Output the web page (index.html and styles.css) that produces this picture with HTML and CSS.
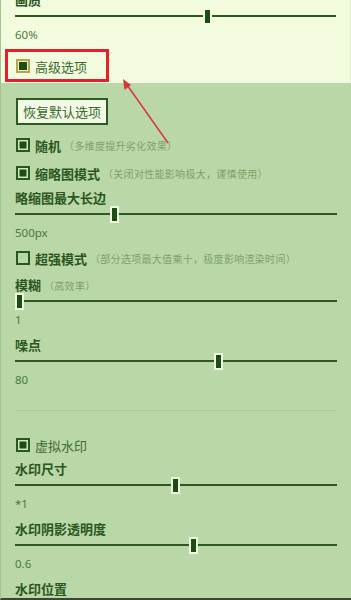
FILE: index.html
```html
<!DOCTYPE html>
<html lang="zh-CN">
<head>
<meta charset="utf-8">
<title>设置</title>
<link rel="stylesheet" href="styles.css">
</head>
<body>
<div class="frame">
  <section class="top">
    <div class="label first">画质</div>
    <div class="slider"><span class="thumb" style="left:188px"></span></div>
    <div class="value">60%</div>
    <div class="cb-row adv"><span class="cb checked focus"></span><span class="cb-text">高级选项</span></div>
  </section>
  <section class="adv-panel">
    <button class="reset">恢复默认选项</button>
    <div class="cb-row r1"><span class="cb checked"></span><span class="cb-text bold">随机</span><span class="hint">（多维度提升劣化效果）</span></div>
    <div class="cb-row r2"><span class="cb checked"></span><span class="cb-text bold">缩略图模式</span><span class="hint">（关闭对性能影响极大，谨慎使用）</span></div>
    <div class="label">略缩图最大长边</div>
    <div class="slider"><span class="thumb" style="left:95px"></span></div>
    <div class="value">500px</div>
    <div class="cb-row r3"><span class="cb"></span><span class="cb-text bold">超强模式</span><span class="hint">（部分选项最大值乘十，极度影响渲染时间）</span></div>
    <div class="label">模糊<span class="hint">（高效率）</span></div>
    <div class="slider"><span class="thumb" style="left:0px"></span></div>
    <div class="value">1</div>
    <div class="label">噪点</div>
    <div class="slider"><span class="thumb" style="left:199px"></span></div>
    <div class="value">80</div>
    <hr class="divider">
    <div class="cb-row r4"><span class="cb checked"></span><span class="cb-text">虚拟水印</span></div>
    <div class="label">水印尺寸</div>
    <div class="slider"><span class="thumb" style="left:156px"></span></div>
    <div class="value">*1</div>
    <div class="label">水印阴影透明度</div>
    <div class="slider"><span class="thumb" style="left:174px"></span></div>
    <div class="value">0.6</div>
    <div class="label">水印位置</div>
  </section>
  <div class="mark-box"></div>
  <svg class="mark-arrow" width="351" height="600" viewBox="0 0 351 600">
    <line x1="168" y1="143" x2="125" y2="82" stroke="#d9363a" stroke-width="1.5"/>
    <path d="M123 79 L124.5 90 L131 85 Z" fill="#d9363a"/>
  </svg>
</div>
</body>
</html>
```
FILE: styles.css
```css
html, body {
  margin: 0;
  padding: 0;
}
body {
  font-family: "Noto Sans CJK SC", "Noto Sans", sans-serif;
  background: #bad7a8;
}
.frame {
  position: relative;
  width: 351px;
  height: 600px;
  box-sizing: border-box;
  overflow: hidden;
  border-bottom: 2px solid #3b4535;
  border-left: 1px solid #a3c391;
}
.top {
  background: #f3fbdf;
  padding: 0 14px 8px 14px;
  border-right: 1px solid #dfeccb;
}
.adv-panel {
  background: #bad7a8;
  padding: 15px 14px 0 14px;
}
.label {
  font-size: 13px;
  font-weight: 700;
  color: #2b561d;
  height: 18px;
  line-height: 18px;
  white-space: nowrap;
}
.label.first {
  margin-top: -9px;
}
.slider {
  position: relative;
  height: 15px;
}
.slider::before {
  content: "";
  position: absolute;
  left: 0;
  right: 0;
  top: 6px;
  height: 2px;
  background: #2f5820;
}
.thumb {
  position: absolute;
  top: -1px;
  width: 5px;
  height: 13px;
  background: #1e4c12;
  border: 2px solid #eef7e2;
}
.top .thumb {
  border-color: #f3fbdf;
}
.value {
  margin-top: 2px;
  height: 18px;
  line-height: 18px;
  font-size: 11.5px;
  font-family: "Noto Sans", "Noto Sans CJK SC", sans-serif;
  color: #4c7a3b;
  margin-bottom: 7px;
}
.cb-row {
  display: flex;
  align-items: center;
  height: 18px;
  white-space: nowrap;
}
.cb {
  box-sizing: border-box;
  width: 14px;
  height: 14px;
  border: 2px solid #2a581c;
  flex: none;
  margin-left: 1px;
}
.cb.checked {
  background: #1f4d13;
  box-shadow: inset 0 0 0 1.5px #cfe6bd;
}
.cb.focus {
  border-color: #b7a54c;
  box-shadow: inset 0 0 0 1px #e9f2cf;
}
.cb-text {
  margin-left: 5px;
  font-size: 13px;
  color: #3d6b2f;
}
.cb-text.bold {
  font-weight: 700;
  color: #2b561d;
}
.hint {
  font-size: 10px;
  letter-spacing: 0.3px;
  font-weight: 400;
  color: #7ca468;
  margin-left: 3px;
}
.top .adv {
  margin-top: 13px;
}
.reset {
  display: block;
  box-sizing: border-box;
  height: 27px;
  padding: 0 5px;
  margin: 0 0 11px 1px;
  border: 2px solid #2c5a20;
  background: #f2fae6;
  color: #3b6a2e;
  font-family: "Noto Sans CJK SC", sans-serif;
  font-size: 13px;
  line-height: 23px;
}
.r1 { margin-bottom: 10px; }
.r2 { margin-bottom: 7px; }
.r3 { margin-bottom: 9px; }
.r4 { margin-bottom: 6px; }
.divider {
  border: 0;
  height: 1px;
  background: #a9c997;
  margin: 21px 0 25px 0;
}
.mark-box {
  position: absolute;
  left: 4px;
  top: 49px;
  width: 98px;
  height: 27px;
  border: 3px solid #e5202a;
}
.mark-arrow {
  position: absolute;
  left: -1px;
  top: 0;
  pointer-events: none;
}
```
